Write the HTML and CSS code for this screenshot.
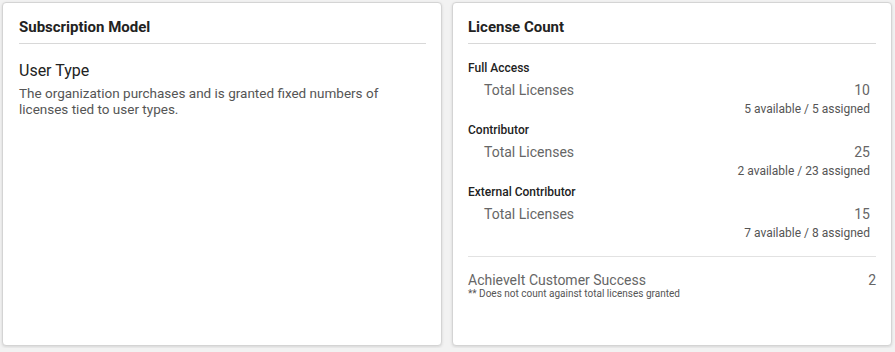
FILE: index.html
```html
<!DOCTYPE html>
<html>
<head>
<meta charset="utf-8" />
<link rel="stylesheet" href="styles.css">
<title>Subscription</title>
</head>
<body>
  <div class="cards">
    <div class="card">
      <div class="card-title">Subscription Model</div>
      <div class="model-name">User Type</div>
      <div class="model-desc">The organization purchases and is granted fixed numbers of licenses tied to user types.</div>
    </div>
    <div class="card">
      <div class="card-title">License Count</div>
      <div class="group">
        <div class="group-name">Full Access</div>
        <div class="row"><span>Total Licenses</span><span>10</span></div>
        <div class="sub">5 available / 5 assigned</div>
      </div>
      <div class="group">
        <div class="group-name">Contributor</div>
        <div class="row"><span>Total Licenses</span><span>25</span></div>
        <div class="sub">2 available / 23 assigned</div>
      </div>
      <div class="group">
        <div class="group-name">External Contributor</div>
        <div class="row"><span>Total Licenses</span><span>15</span></div>
        <div class="sub">7 available / 8 assigned</div>
      </div>
      <div class="extra">
        <div class="extra-row"><span>AchieveIt Customer Success</span><span>2</span></div>
        <div class="note">** Does not count against total licenses granted</div>
      </div>
    </div>
  </div>
</body>
</html>
```

FILE: styles.css
```css
*{margin:0;padding:0;box-sizing:border-box;}
body{background:#f2f2f2;font-family:Roboto,"Liberation Sans",Arial,sans-serif;color:#222;padding:2px;}
.cards{display:flex;gap:10px;}
.card{width:440px;height:344px;background:#fff;border:1px solid #d4d4d4;border-radius:4px;box-shadow:0 1px 3px rgba(0,0,0,0.12);padding:0 15px 0 15px;}
.card:first-child{padding-left:16px;}
.card-title{font-size:15px;font-weight:700;line-height:20px;padding-top:14px;padding-bottom:6px;border-bottom:1px solid #d8d8d8;color:#222;}
.model-name{font-size:16px;line-height:18px;margin-top:18px;color:#222;}
.model-desc{font-size:13.5px;line-height:16px;color:#555;padding-right:40px;margin-top:5px;}
.group{padding-top:16px;}
.group + .group{padding-top:6px;}
.group-name{font-size:12px;font-weight:500;line-height:16px;color:#222;}
.row{display:flex;justify-content:space-between;font-size:14px;line-height:18px;color:#666;margin-top:5px;padding:0 6px 0 16px;}
.sub{font-size:12px;line-height:14px;color:#555;text-align:right;padding-right:6px;margin-top:3px;}
.extra{margin-top:16px;border-top:1px solid #e2e2e2;padding-top:14px;}
.extra-row{display:flex;justify-content:space-between;font-size:14px;line-height:18px;color:#666;}
.note{font-size:10px;line-height:10px;color:#555;}
```
